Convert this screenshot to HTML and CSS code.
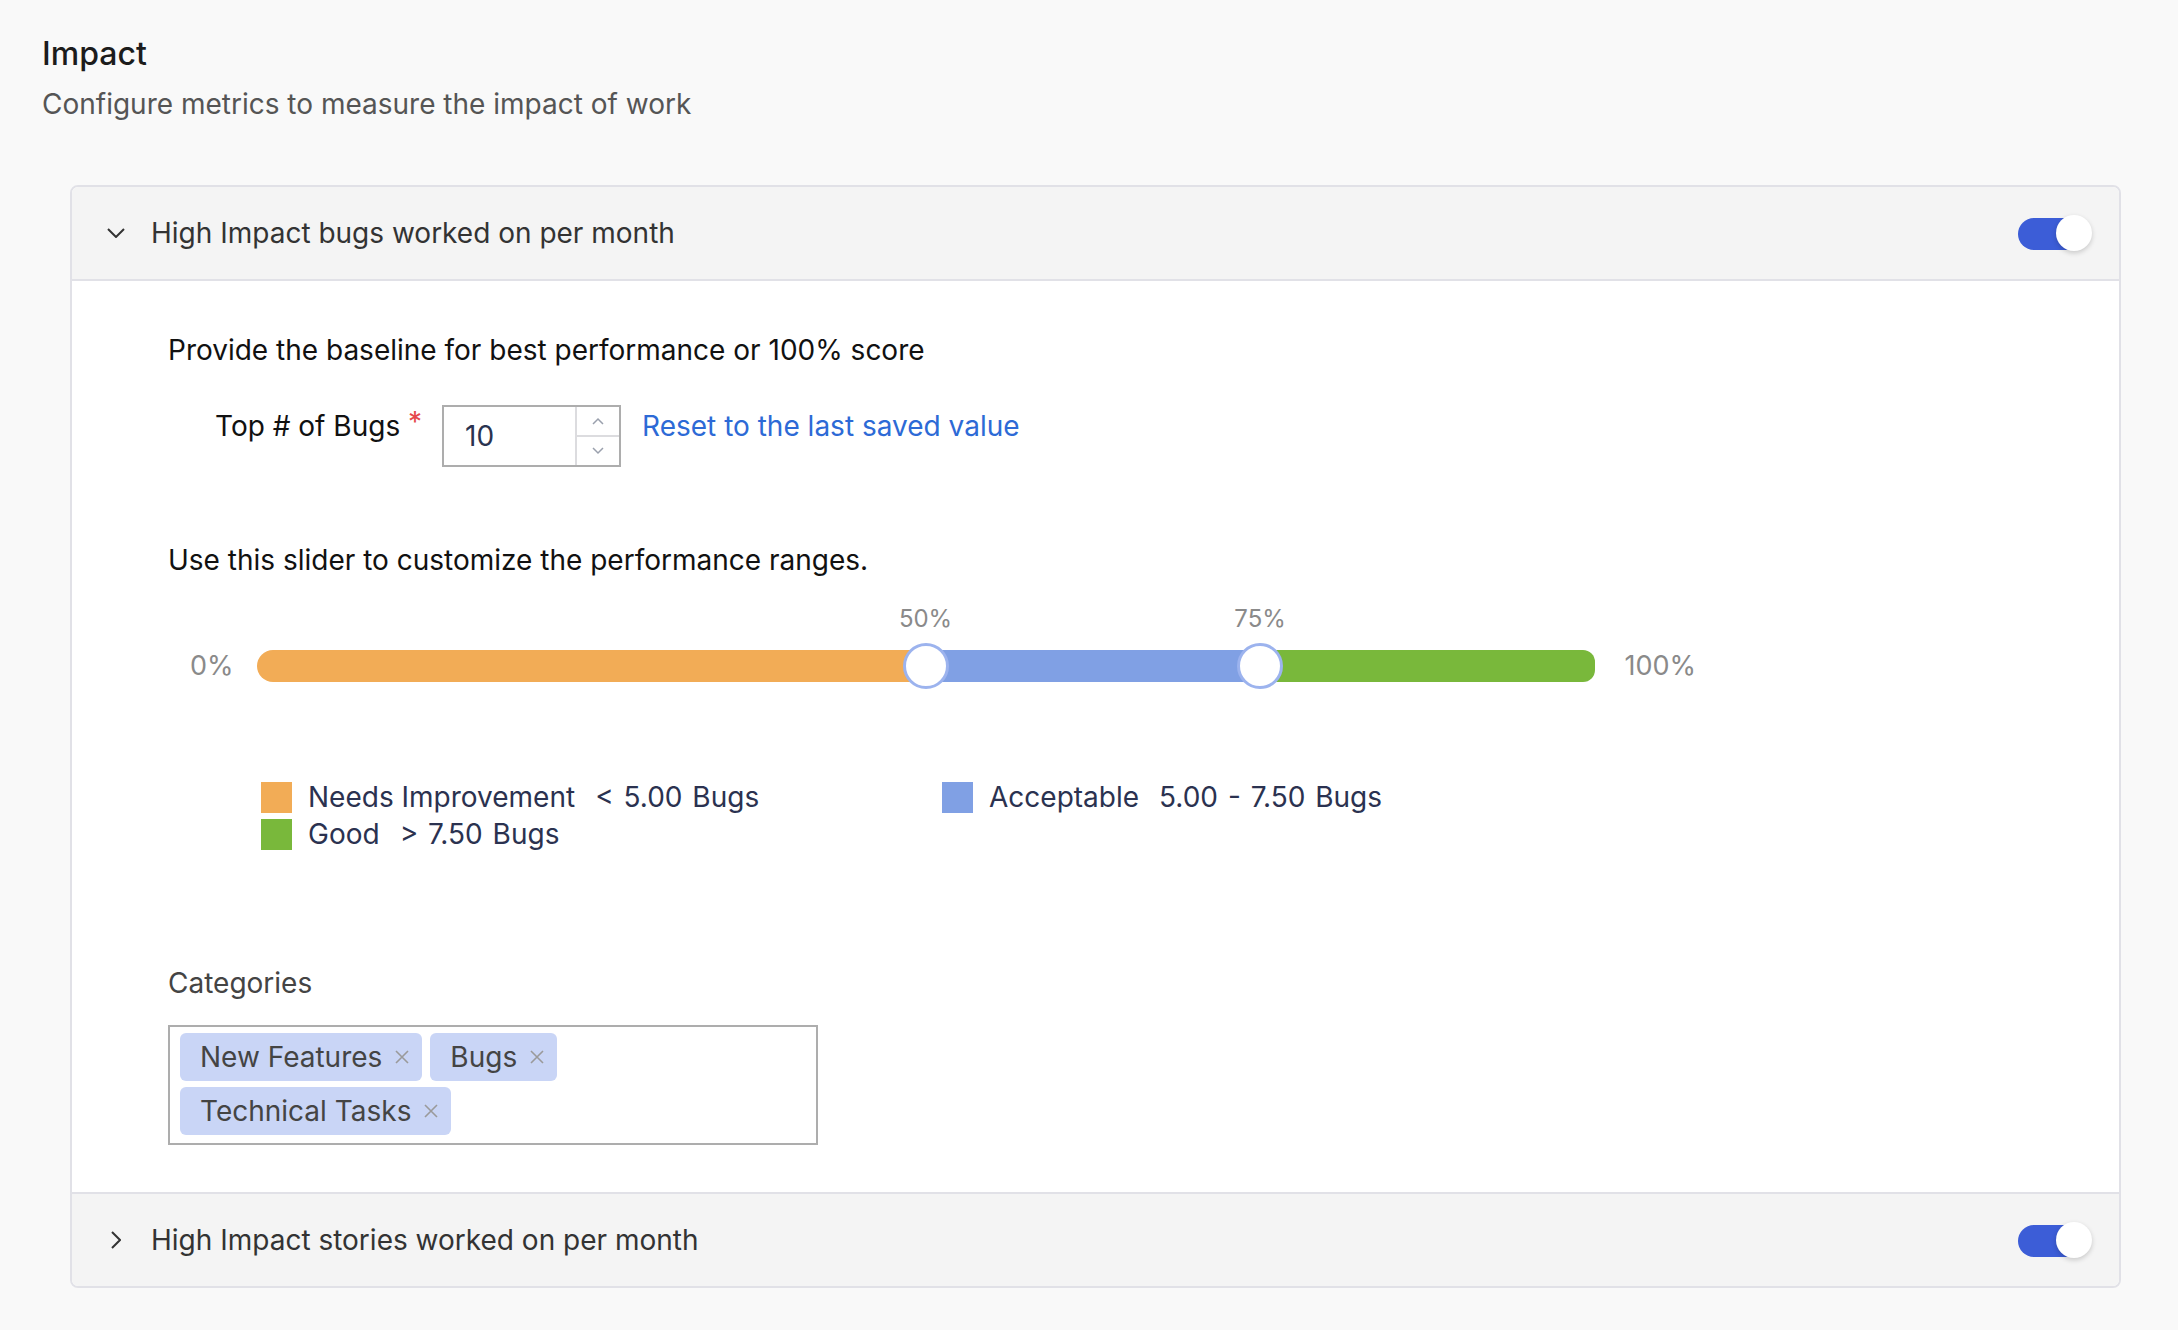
FILE: index.html
```html
<!DOCTYPE html>
<html lang="en">
<head>
<meta charset="utf-8">
<title>Impact</title>
<link rel="stylesheet" href="styles.css">
</head>
<body>
<div class="page">
  <h1 class="title">Impact</h1>
  <p class="subtitle">Configure metrics to measure the impact of work</p>

  <div class="card">
    <div class="panel-header">
      <svg class="chev chev-down" width="18" height="10" viewBox="0 0 18 10"><polyline points="1,1 9,9 17,1" fill="none" stroke="#333" stroke-width="2"/></svg>
      <span class="panel-title">High Impact bugs worked on per month</span>
      <div class="toggle"><div class="toggle-track"></div><div class="toggle-knob"></div></div>
    </div>

    <div class="panel-body">
      <p class="section-text">Provide the baseline for best performance or 100% score</p>

      <div class="field-row">
        <label class="field-label">Top # of Bugs <span class="req">*</span></label>
        <div class="num-input">
          <span class="num-value">10</span>
          <div class="spinner">
            <div class="spin-btn"><svg width="12" height="8" viewBox="0 0 12 8"><polyline points="1,7 6,2 11,7" fill="none" stroke="#9aa0ad" stroke-width="1.5"/></svg></div>
            <div class="spin-btn spin-down"><svg width="12" height="8" viewBox="0 0 12 8"><polyline points="1,1 6,6 11,1" fill="none" stroke="#9aa0ad" stroke-width="1.5"/></svg></div>
          </div>
        </div>
        <a class="reset-link" href="#">Reset to the last saved value</a>
      </div>

      <p class="section-text slider-intro">Use this slider to customize the performance ranges.</p>

      <div class="slider-row">
        <span class="end-label">0%</span>
        <div class="track">
          <div class="seg seg-orange"></div>
          <div class="seg seg-blue"></div>
          <div class="seg seg-green"></div>
          <div class="mark" style="left:50%"><span class="mark-label">50%</span><span class="thumb"></span></div>
          <div class="mark" style="left:75%"><span class="mark-label">75%</span><span class="thumb"></span></div>
        </div>
        <span class="end-label">100%</span>
      </div>

      <div class="legend">
        <div class="legend-item"><span class="swatch sw-orange"></span><span class="legend-name">Needs Improvement</span><span class="legend-range">&lt; 5.00 Bugs</span></div>
        <div class="legend-item"><span class="swatch sw-blue"></span><span class="legend-name">Acceptable</span><span class="legend-range">5.00 - 7.50 Bugs</span></div>
        <div class="legend-item"><span class="swatch sw-green"></span><span class="legend-name">Good</span><span class="legend-range">&gt; 7.50 Bugs</span></div>
      </div>

      <p class="cat-label">Categories</p>
      <div class="tag-box">
        <span class="tag">New Features<svg class="tag-x" width="14" height="14" viewBox="0 0 14 14"><path d="M1 1L13 13M13 1L1 13" stroke="#9a9a9a" stroke-width="1.6"/></svg></span>
        <span class="tag">Bugs<svg class="tag-x" width="14" height="14" viewBox="0 0 14 14"><path d="M1 1L13 13M13 1L1 13" stroke="#9a9a9a" stroke-width="1.6"/></svg></span>
        <span class="tag">Technical Tasks<svg class="tag-x" width="14" height="14" viewBox="0 0 14 14"><path d="M1 1L13 13M13 1L1 13" stroke="#9a9a9a" stroke-width="1.6"/></svg></span>
      </div>
    </div>

    <div class="panel-header panel-header-second">
      <svg class="chev chev-right" width="10" height="18" viewBox="0 0 10 18"><polyline points="1,1 9,9 1,17" fill="none" stroke="#333" stroke-width="2"/></svg>
      <span class="panel-title">High Impact stories worked on per month</span>
      <div class="toggle"><div class="toggle-track"></div><div class="toggle-knob"></div></div>
    </div>
  </div>
</div>
</body>
</html>
```

FILE: styles.css
```css
* { box-sizing: border-box; }

body {
  margin: 0;
  background: #f9f9f9;
  font-family: Inter, "Noto Sans", "Liberation Sans", sans-serif;
  color: #111;
}

.page {
  padding: 34px 0 44px 42px;
}

.title {
  margin: 0;
  font-size: 32px;
  line-height: 40px;
  font-weight: 500;
  color: #1c1c1c;
}

.subtitle {
  margin: 10px 0 0;
  font-size: 28px;
  line-height: 40px;
  color: #555;
}

.card {
  margin: 61px 0 0 28px;
  width: 2051px;
  border: 2px solid #e1e1e7;
  border-radius: 8px;
  overflow: hidden;
  background: #fff;
}

.panel-header {
  height: 94px;
  display: flex;
  align-items: center;
  padding: 0 27px 0 35px;
  background: #f4f4f4;
  border-bottom: 2px solid #e1e1e7;
}

.panel-header-second {
  border-bottom: 0;
  border-top: 2px solid #e1e1e7;
  height: 94px;
}

.chev { flex: none; }
.chev-down { margin-right: 26px; }
.chev-right { margin: 0 30px 0 4px; }

.panel-title {
  flex: 1;
  font-size: 28px;
  line-height: 40px;
  color: #333;
}

.toggle {
  position: relative;
  width: 74px;
  height: 36px;
  flex: none;
}

.toggle-track {
  position: absolute;
  left: 0;
  top: 3px;
  width: 66px;
  height: 32px;
  border-radius: 16px;
  background: #3c5dd7;
}

.toggle-knob {
  position: absolute;
  right: 0;
  top: 0;
  width: 36px;
  height: 36px;
  border-radius: 50%;
  background: #fff;
  box-shadow: 0 2px 5px rgba(0, 0, 0, 0.18);
}

.panel-body {
  padding: 49px 97px 47px 96px;
}

.section-text {
  margin: 0;
  font-size: 28px;
  line-height: 40px;
  color: #111;
}

.field-row {
  display: flex;
  align-items: flex-start;
  margin: 35px 0 0 47px;
}

.field-label {
  font-size: 28px;
  line-height: 40px;
  color: #111;
  margin-top: 1px;
  margin-right: 20px;
}

.req {
  color: #e5484d;
  position: relative;
  top: -4px;
}

.num-input {
  display: flex;
  width: 179px;
  height: 62px;
  border: 2px solid #adadad;
  background: #fff;
}

.num-value {
  flex: 1;
  padding-left: 21px;
  font-size: 28px;
  line-height: 58px;
  color: #2a3350;
}

.spinner {
  width: 44px;
  border-left: 2px solid #dcdcdf;
  display: flex;
  flex-direction: column;
}

.spin-btn {
  flex: 1;
  display: flex;
  align-items: center;
  justify-content: center;
}

.spin-down { border-top: 2px solid #dcdcdf; }

.reset-link {
  margin-left: 21px;
  margin-top: 1px;
  font-size: 28px;
  line-height: 40px;
  color: #2d6ad6;
  text-decoration: none;
}

.slider-intro {
  margin-top: 73px;
}

.slider-row {
  display: flex;
  align-items: center;
  margin: 66px 0 0 22px;
}

.end-label {
  font-size: 27px;
  line-height: 40px;
  color: #8a8a8a;
}

.track {
  position: relative;
  display: flex;
  width: 1338px;
  height: 32px;
  margin: 0 30px 0 23px;
}

.seg { height: 32px; }
.seg-orange { width: 50%; background: #f2ac56; border-radius: 16px 0 0 16px; }
.seg-blue { width: 25%; background: #80a0e4; }
.seg-green { width: 25%; background: #79b83b; border-radius: 0 12px 12px 0; }

.mark {
  position: absolute;
  top: 0;
  width: 0;
  height: 32px;
}

.mark-label {
  position: absolute;
  left: -40px;
  width: 80px;
  top: -46px;
  text-align: center;
  font-size: 24px;
  line-height: 30px;
  color: #8a8a8a;
}

.thumb {
  position: absolute;
  left: -23px;
  top: -7px;
  width: 46px;
  height: 46px;
  border-radius: 50%;
  background: #fff;
  border: 3px solid #9cb3ee;
}

.legend {
  display: grid;
  grid-template-columns: 681px auto;
  row-gap: 6px;
  margin: 96px 0 0 93px;
}

.legend-item {
  display: flex;
  align-items: center;
  height: 31px;
  font-size: 28px;
  line-height: 31px;
  color: #2b3250;
}

.swatch {
  width: 31px;
  height: 31px;
  margin-right: 16px;
  flex: none;
}

.sw-orange { background: #f2ac56; }
.sw-blue { background: #80a0e4; }
.sw-green { background: #79b83b; }

.legend-range { margin-left: 20px; word-spacing: 2px; }

.cat-label {
  margin: 113px 0 0;
  font-size: 28px;
  line-height: 40px;
  color: #444;
}

.tag-box {
  margin-top: 22px;
  width: 650px;
  border: 2px solid #adadad;
  padding: 6px 10px 8px;
  display: flex;
  flex-wrap: wrap;
  gap: 6px 8px;
  background: #fff;
}

.tag {
  display: inline-flex;
  align-items: center;
  height: 48px;
  padding: 0 13px 0 20px;
  border-radius: 6px;
  background: #c9d5f6;
  font-size: 28px;
  color: #444;
}

.tag-x {
  margin-left: 13px;
  flex: none;
}
```
